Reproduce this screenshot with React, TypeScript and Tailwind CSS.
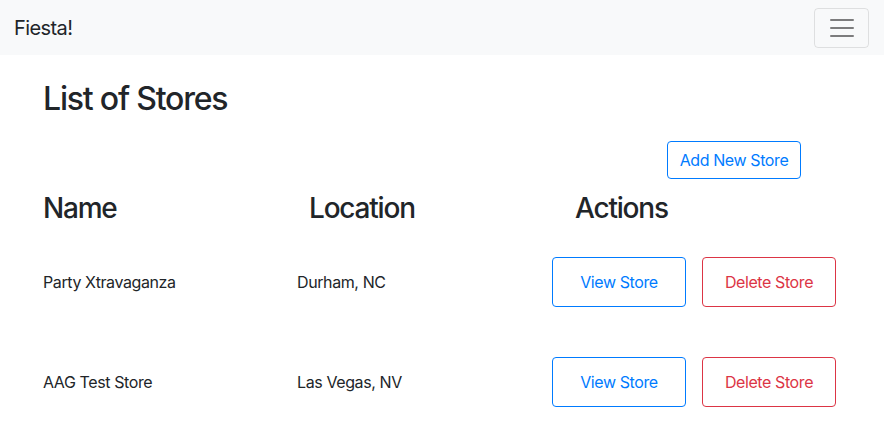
import React from "react";

type Store = {
  name: string;
  location: string;
};

const stores: Store[] = [
  { name: "Party Xtravaganza", location: "Durham, NC" },
  { name: "AAG Test Store", location: "Las Vegas, NV" },
];

const Navbar = () => {
  return (
    <nav className="h-[55px] bg-[#f8f9fa] flex items-center justify-between pl-[14px] pr-[15px]">
      <span className="text-[20px] leading-none tracking-[-0.6px] text-[#212529]">Fiesta!</span>
      <button className="w-[55px] h-[40px] border border-[rgba(0,0,0,0.1)] rounded-[4px] flex items-center justify-center">
        <svg width="30" height="30" viewBox="0 0 30 30">
          <path
            d="M4 7h22M4 15h22M4 23h22"
            stroke="rgba(0,0,0,0.5)"
            strokeWidth="2"
            strokeLinecap="round"
            strokeMiterlimit="10"
          />
        </svg>
      </button>
    </nav>
  );
};

const StoreRow = ({ store }: { store: Store }) => {
  return (
    <div className="flex items-center h-[50px] mb-[50px]">
      <div className="w-[254px]">{store.name}</div>
      <div className="w-[255px]">{store.location}</div>
      <div className="flex gap-[16px]">
        <button className="w-[134px] h-[50px] border border-[#007bff] text-[#007bff] rounded-[4px]">
          View Store
        </button>
        <button className="w-[134px] h-[50px] border border-[#dc3545] text-[#dc3545] rounded-[4px]">
          Delete Store
        </button>
      </div>
    </div>
  );
};

export default function App() {
  return (
    <div className="min-h-[438px] bg-white text-[#212529] text-[16px] tracking-[-0.4px] font-['Inter',sans-serif]">
      <Navbar />
      <main className="pl-[43px]">
        <h1 className="mt-[25px] text-[32px] leading-[38px] font-medium tracking-[-1.2px]">List of Stores</h1>
        <div className="flex justify-end pr-[83px] mt-[23px]">
          <button className="w-[134px] h-[38px] border border-[#007bff] text-[#007bff] rounded-[4px]">
            Add New Store
          </button>
        </div>
        <div className="grid grid-cols-[266px_266px_266px] mt-[12px] text-[28px] leading-[34px] font-medium tracking-[-1.2px]">
          <h3>Name</h3>
          <h3>Location</h3>
          <h3>Actions</h3>
        </div>
        <div className="mt-[32px]">
          {stores.map((s) => (
            <StoreRow key={s.name} store={s} />
          ))}
        </div>
      </main>
    </div>
  );
}
